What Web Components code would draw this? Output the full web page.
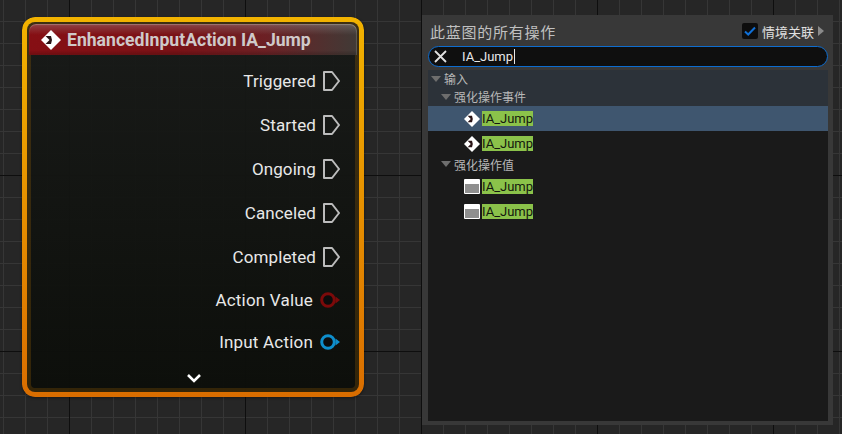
<!DOCTYPE html>
<html>
<head>
<meta charset="utf-8">
<title>IA_Jump</title>
<style>
  html, body { margin: 0; background: #262626; }
  body { font-family: Roboto, "Noto Sans CJK SC", sans-serif; }
</style>
</head>
<body>
<graph-canvas>
  <input-node title="EnhancedInputAction IA_Jump">
    <node-pin kind="exec">Triggered</node-pin>
    <node-pin kind="exec">Started</node-pin>
    <node-pin kind="exec">Ongoing</node-pin>
    <node-pin kind="exec">Canceled</node-pin>
    <node-pin kind="exec">Completed</node-pin>
    <node-pin kind="data" color="#7c0a0a" size="42">Action Value</node-pin>
    <node-pin kind="data" color="#0e8ecb" size="42">Input Action</node-pin>
  </input-node>
  <action-palette>
    <tree-row kind="category" level="0" size="17">输入</tree-row>
    <tree-row kind="category" level="1" size="19">强化操作事件</tree-row>
    <tree-row kind="action" icon="event" selected>IA_Jump</tree-row>
    <tree-row kind="action" icon="event">IA_Jump</tree-row>
    <tree-row kind="category" level="1" size="18" dark>强化操作值</tree-row>
    <tree-row kind="action" icon="value">IA_Jump</tree-row>
    <tree-row kind="action" icon="value">IA_Jump</tree-row>
  </action-palette>
</graph-canvas>

<script>
const EVENT_ICON = (size) => `
  <svg width="${size}" height="${size}" viewBox="0 0 20 20">
    <path d="M10 0 20 10 10 20 0 10Z" fill="#fff"/>
    <path d="M4.500 6H10L11 10 10 14H4.500L8.500 10Z" fill="#2a1416"/>
  </svg>`;

class GraphCanvas extends HTMLElement {
  constructor() {
    super();
    const shadow = this.attachShadow({ mode: 'open' });
    shadow.innerHTML = `
      <style>
        :host {
          display: flex;
          align-items: flex-start;
          width: 842px;
          height: 434px;
          box-sizing: border-box;
          padding: 15px 9px 0 22px;
          overflow: hidden;
          background-color: #262626;
          background-image:
            linear-gradient(90deg, #0e0e0e 1px, transparent 1px),
            linear-gradient(#0e0e0e 1px, transparent 1px),
            linear-gradient(90deg, #363636 1px, transparent 1px),
            linear-gradient(#363636 1px, transparent 1px);
          background-size: 176px 176px, 176px 176px, 22px 22px, 22px 22px;
          background-position: 69px 0, 0 175px, 3px 0, 0 21px;
        }
      </style>
      <slot></slot>
    `;
  }
}

class InputNode extends HTMLElement {
  constructor() {
    super();
    const shadow = this.attachShadow({ mode: 'open' });
    shadow.innerHTML = `
      <style>
        :host {
          display: block;
          position: relative;
          width: 342px;
          height: 380px;
          margin: 2px 58px 0 0;
          flex: none;
          box-sizing: border-box;
          padding: 5px;
          border-radius: 13px;
          color: #e8e8e8;
          box-shadow: 0 1px 3px rgba(0, 0, 0, 0.4);
        }
        .ring {
          position: absolute;
          inset: 0;
          padding: 5px;
          border-radius: 13px;
          background: linear-gradient(#f2b300, #d96d00);
          -webkit-mask: linear-gradient(#000 0 0) content-box, linear-gradient(#000 0 0);
          -webkit-mask-composite: xor;
          mask-composite: exclude;
        }
        .inner {
          display: flex;
          flex-direction: column;
          height: 100%;
          box-sizing: border-box;
          padding: 2px 2px 0;
          border-radius: 8px;
          background: linear-gradient(rgba(24, 26, 24, 0.94), rgba(12, 14, 10, 0.97));
          box-shadow: inset 0 0 0 4px rgba(190, 120, 0, 0.22);
        }
        .head {
          display: flex;
          align-items: center;
          gap: 6px;
          height: 31px;
          flex: none;
          padding-left: 12px;
          border-radius: 7px 7px 0 0;
          background:
            linear-gradient(rgba(170, 170, 170, 0.32), rgba(170, 170, 170, 0) 35%, rgba(0, 0, 0, 0) 85%, rgba(0, 0, 0, 0.2)),
            linear-gradient(90deg, #860f14 0, #7a1216 45%, #6c2024 72%, #403a36 100%);
          box-shadow: inset 0 1px 1px rgba(210, 205, 190, 0.35), inset -1px 0 1px rgba(210, 205, 190, 0.2);
          font-size: 17.6px;
          font-weight: 700;
          color: #cfc9c9;
          white-space: nowrap;
        }
        .head svg { display: block; flex: none; }
        .pins {
          display: flex;
          flex-direction: column;
          padding-top: 4px;
        }
        .more {
          display: flex;
          justify-content: center;
          margin: 10px 0 0 2px;
        }
      </style>
      <div class="ring"></div>
      <div class="inner">
        <div class="head">${EVENT_ICON(20)}<span id="title"></span></div>
        <div class="pins"><slot></slot></div>
        <div class="more">
          <svg width="16" height="10" viewBox="0 0 16 10"><path d="M2 2 8 8 14 2" fill="none" stroke="#fff" stroke-width="2.600"/></svg>
        </div>
      </div>
    `;
  }

  connectedCallback() {
    this.shadowRoot.getElementById('title').textContent = this.getAttribute('title');
  }
}

class NodePin extends HTMLElement {
  constructor() {
    super();
    this.attachShadow({ mode: 'open' });
  }

  connectedCallback() {
    const color = this.getAttribute('color');
    const isExec = this.getAttribute('kind') === 'exec';
    const pin = isExec
      ? `<svg width="17" height="20" viewBox="0 0 17 20"><path d="M1 1H9L16 10 9 19H1Z" fill="none" stroke="#bcbcbc" stroke-width="2" stroke-linejoin="round"/></svg>`
      : `<svg width="20" height="16" viewBox="0 0 20 16"><circle cx="8" cy="8" r="6.300" fill="#0c0c0c" stroke="${color}" stroke-width="3"/><path d="M15.500 4.500 20 8 15.500 11.500Z" fill="${color}"/></svg>`;
    this.shadowRoot.innerHTML = `
      <style>
        :host {
          display: flex;
          align-items: center;
          justify-content: flex-end;
          gap: 7px;
          height: ${this.getAttribute('size') || 44}px;
          padding-right: 17px;
          font-size: 17px;
          letter-spacing: ${isExec ? 0.1 : 0.2}px;
        }
        svg { display: block; flex: none; }
      </style>
      <slot></slot>${pin}
    `;
  }
}

class ActionPalette extends HTMLElement {
  constructor() {
    super();
    const shadow = this.attachShadow({ mode: 'open' });
    shadow.innerHTML = `
      <style>
        :host {
          display: flex;
          flex-direction: column;
          width: 411px;
          height: 410px;
          flex: none;
          box-sizing: border-box;
          padding: 0 5px 4px 6px;
          background: #383838;
          color: #c8c8c8;
        }
        .top {
          display: flex;
          align-items: center;
          justify-content: space-between;
          height: 31px;
          flex: none;
          box-sizing: border-box;
          padding: 1px 4px 0 2px;
        }
        .title { font-size: 15px; color: #c0c0c0; letter-spacing: 0.75px; }
        .context { display: flex; align-items: center; gap: 4px; font-size: 13px; color: #e0e0e0; }
        .check {
          display: flex;
          align-items: center;
          justify-content: center;
          width: 16px;
          height: 16px;
          border-radius: 2px;
          background: #0d0d0d;
        }
        .search {
          display: flex;
          align-items: center;
          height: 21px;
          flex: none;
          box-sizing: border-box;
          margin-bottom: 3px;
          padding-left: 5px;
          border: 1px solid #0e6dcf;
          border-radius: 11px;
          background: #0f0f0f;
          color: #e8e8e8;
          font-size: 13px;
        }
        .search svg { display: block; flex: none; margin-right: 15px; }
        .caret { width: 1px; height: 15px; margin-left: 1px; background: #e8e8e8; }
        .list {
          flex: 1;
          background: #1a1a1a;
          display: flex;
          flex-direction: column;
        }
      </style>
      <div class="top">
        <span class="title">此蓝图的所有操作</span>
        <span class="context">
          <span class="check">
            <svg width="12" height="10" viewBox="0 0 12 10"><path d="M1 5.500 4.200 8.500 11 1.500" fill="none" stroke="#0f6fd6" stroke-width="2"/></svg>
          </span>
          <span>情境关联</span>
          <svg width="6" height="10" viewBox="0 0 6 10"><path d="M0 0 6 5 0 10Z" fill="#8a8a8a"/></svg>
        </span>
      </div>
      <div class="search">
        <svg width="13" height="13" viewBox="0 0 13 13"><path d="M1 1 12 12M12 1 1 12" stroke="#e0e0e0" stroke-width="1.800"/></svg>
        <span>IA_Jump</span><span class="caret"></span>
      </div>
      <div class="list"><slot></slot></div>
    `;
  }
}

class TreeRow extends HTMLElement {
  constructor() {
    super();
    this.attachShadow({ mode: 'open' });
  }

  connectedCallback() {
    const isCategory = this.getAttribute('kind') === 'category';
    const level = Number(this.getAttribute('level') || 0);
    let bg = '#1a1a1a';
    if (isCategory && !this.hasAttribute('dark')) bg = '#2c3239';
    if (this.hasAttribute('selected')) bg = '#3f566f';

    let inner;
    if (isCategory) {
      inner = `
        <svg width="10" height="6" viewBox="0 0 10 6" style="margin-left:${3 + level * 10}px"><path d="M0 0H10L5 6Z" fill="#6e6e6e"/></svg>
        <slot></slot>`;
    } else {
      const icon = this.getAttribute('icon') === 'event'
        ? EVENT_ICON(16)
        : `<svg width="16" height="15" viewBox="0 0 16 15"><rect width="16" height="15" rx="1" fill="#fff"/><rect x="1" y="5" width="14" height="9" fill="#8f8f8f"/></svg>`;
      inner = `<span class="icon">${icon}</span><span class="hit"><slot></slot></span>`;
    }

    this.shadowRoot.innerHTML = `
      <style>
        :host {
          display: flex;
          align-items: center;
          height: ${this.getAttribute('size') || 25}px;
          flex: none;
          box-sizing: border-box;
          padding-bottom: ${this.hasAttribute('dark') ? 2 : 0}px;
          background: ${bg};
          font-size: 12px;
          color: #b8b8b8;
        }
        svg { display: block; flex: none; }
        :host svg { margin-right: 3px; }
        .icon { display: flex; justify-content: flex-end; width: 52px; margin-right: 2px; }
        .icon svg { margin: 0; }
        .hit {
          display: block;
          height: 15px;
          line-height: 15px;
          background: #8bc24a;
          color: #14180e;
          font-size: 13px;
        }
      </style>
      ${inner}
    `;
  }
}

customElements.define('graph-canvas', GraphCanvas);
customElements.define('input-node', InputNode);
customElements.define('node-pin', NodePin);
customElements.define('action-palette', ActionPalette);
customElements.define('tree-row', TreeRow);
</script>
</body>
</html>
